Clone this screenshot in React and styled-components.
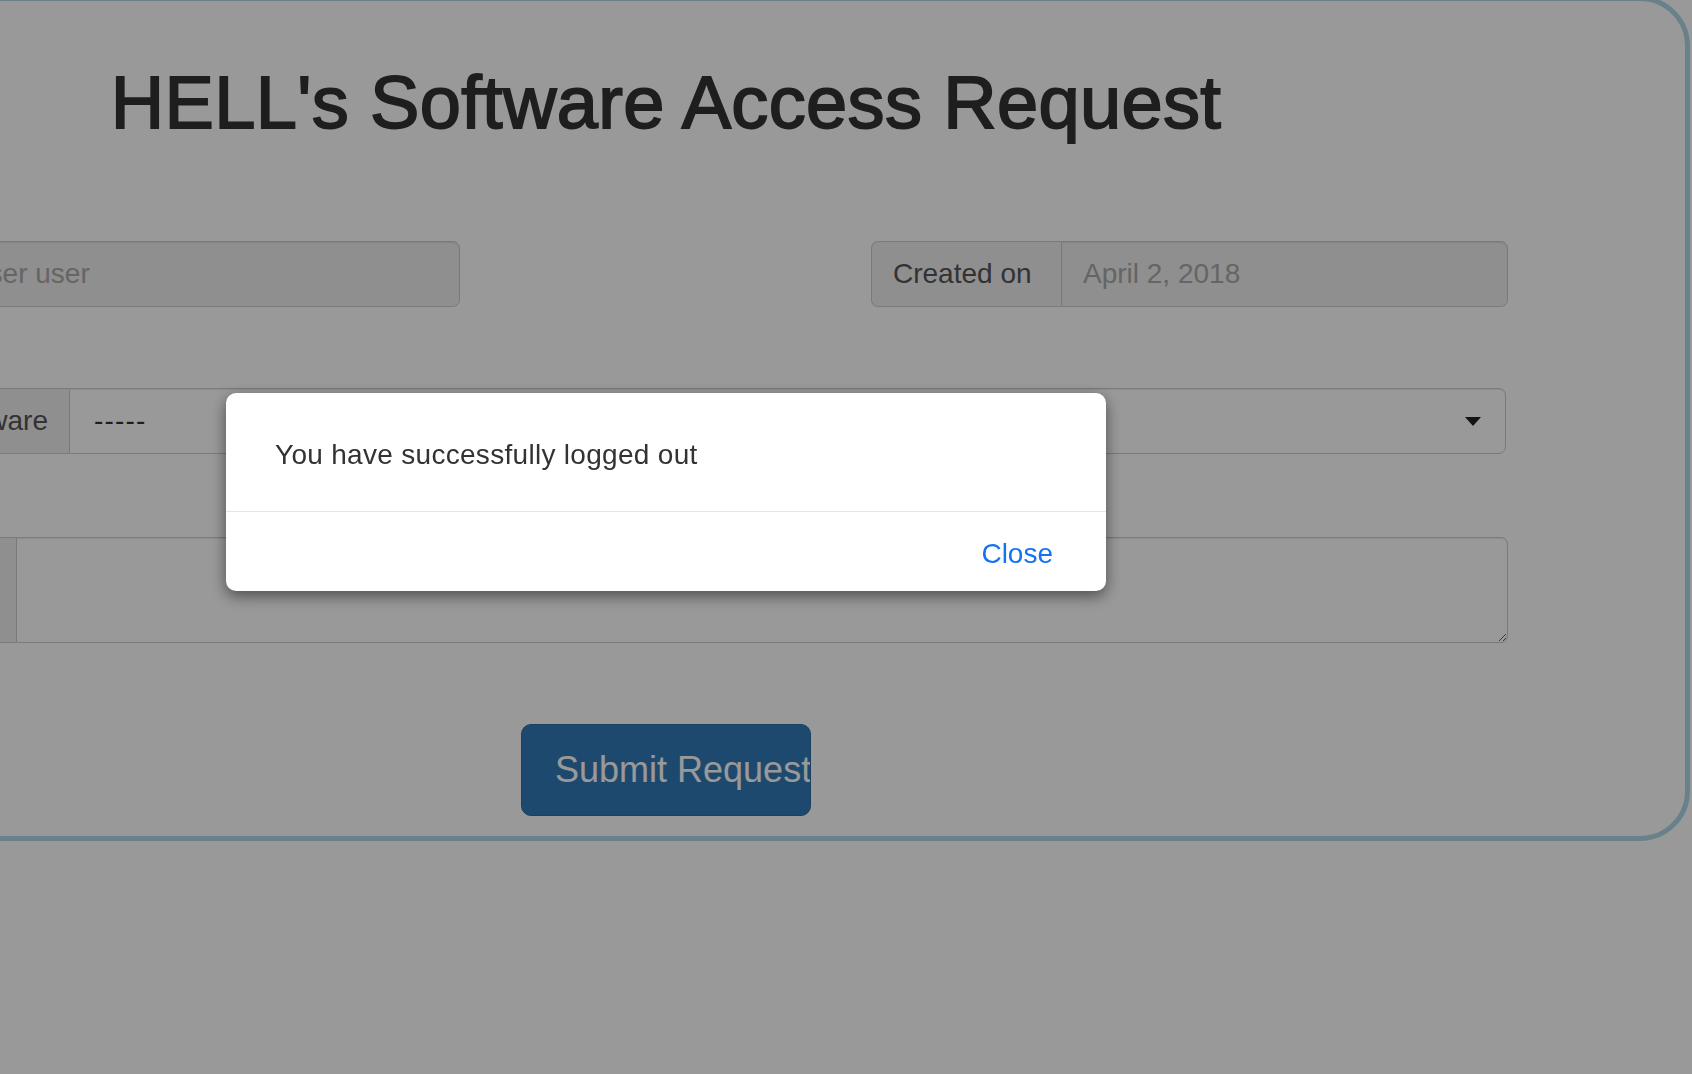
import React from "react";
import styled, { createGlobalStyle } from "styled-components";

const GlobalStyle = createGlobalStyle`
  html, body {
    margin: 0;
    padding: 0;
    background: #ffffff;
    overflow: hidden;
  }
  body {
    font-family: "Liberation Sans", Arial, Helvetica, sans-serif;
    color: #333333;
  }
  * { box-sizing: border-box; }
`;

const Viewport = styled.div`
  position: relative;
  width: 1692px;
  height: 1074px;
  overflow: hidden;
`;

const FormCard = styled.div`
  width: 2048px;
  margin-left: -358px;
  margin-top: -4px;
  border: 5px solid #add8e6;
  border-radius: 50px;
  background: #ffffff;
  padding: 57px 177px 20px;
  display: flex;
  flex-direction: column;
`;

const Title = styled.h1`
  margin: 0;
  font-size: 74px;
  line-height: 89px;
  font-weight: 500;
  color: #333333;
  text-align: center;
  -webkit-text-stroke: 1.8px #333333;
  letter-spacing: 0.35px;
`;

const Row = styled.div`
  display: flex;
  justify-content: ${(p) => p.$justify || "flex-start"};
  margin-top: ${(p) => p.$top}px;
`;

const InputGroup = styled.div`
  display: flex;
  width: ${(p) => (p.$width ? `${p.$width}px` : "100%")};
  height: ${(p) => p.$height || 66}px;
`;

const Addon = styled.span`
  flex: 0 0 ${(p) => p.$width}px;
  display: flex;
  align-items: ${(p) => (p.$top ? "flex-start" : "center")};
  justify-content: ${(p) => (p.$right ? "flex-end" : "flex-start")};
  padding: ${(p) => (p.$top ? "12px 21px" : "0 21px")};
  background: #eeeeee;
  border: 1px solid #cccccc;
  border-right: 0;
  border-radius: 7px 0 0 7px;
  font-size: 28px;
  color: #555555;
  white-space: nowrap;
  overflow: hidden;
`;

const TextField = styled.input`
  flex: 1;
  min-width: 0;
  height: 100%;
  margin: 0;
  padding: 0 21px;
  border: 1px solid #cccccc;
  border-radius: 0 7px 7px 0;
  background: ${(p) => (p.readOnly ? "#eeeeee" : "#ffffff")};
  box-shadow: inset 0 1px 1px rgba(0, 0, 0, 0.075);
  font-family: inherit;
  font-size: 28px;
  color: #555555;
  outline: none;
  &::placeholder {
    color: #a9a9a9;
  }
`;

const SelectBox = styled.div`
  flex: 1;
  display: flex;
  align-items: center;
  justify-content: space-between;
  margin-right: 2px;
  padding: 0 24px 0 24px;
  border: 1px solid #cccccc;
  border-radius: 0 7px 7px 0;
  background: #ffffff;
  box-shadow: inset 0 1px 1px rgba(0, 0, 0, 0.075);
  font-size: 28px;
  color: #333333;
  letter-spacing: 1.2px;
`;

const Caret = styled.svg`
  width: 16px;
  height: 9px;
  flex: 0 0 auto;
`;

const TextArea = styled.textarea`
  flex: 1;
  height: 100%;
  margin: 0;
  padding: 10px 21px;
  border: 1px solid #cccccc;
  border-radius: 0 7px 7px 0;
  background: #ffffff;
  box-shadow: inset 0 1px 1px rgba(0, 0, 0, 0.075);
  font-family: inherit;
  font-size: 28px;
  color: #555555;
  resize: vertical;
  outline: none;
`;

const SubmitButton = styled.button`
  width: 290px;
  height: 92px;
  padding: 0 0 0 33px;
  border: 1px solid #2e6da4;
  border-radius: 10px;
  background: #337ab7;
  color: #ffffff;
  font-family: inherit;
  font-size: 36px;
  text-align: left;
  white-space: nowrap;
  overflow: hidden;
  cursor: pointer;
`;

const Backdrop = styled.div`
  position: fixed;
  inset: 0;
  background: rgba(0, 0, 0, 0.4);
  padding: 393px 0 0 226px;
`;

const Modal = styled.div`
  width: 880px;
  background: #ffffff;
  border-radius: 10px;
  box-shadow: 0 5px 15px rgba(0, 0, 0, 0.5);
  overflow: hidden;
`;

const ModalBody = styled.p`
  margin: 0;
  padding: 41px 49px 35px;
  font-size: 28px;
  line-height: 42px;
  letter-spacing: 0.3px;
  color: #333333;
`;

const ModalFooter = styled.div`
  display: flex;
  justify-content: flex-end;
  padding: 21px 53px 16px;
  border-top: 1px solid #e5e5e5;
`;

const LinkButton = styled.button`
  margin: 0;
  padding: 0;
  border: 0;
  background: none;
  font-family: inherit;
  font-size: 28px;
  line-height: 42px;
  color: #1673ef;
  cursor: pointer;
`;

export default function App() {
  return (
    <>
      <GlobalStyle />
      <Viewport>
        <FormCard>
          <Title>HELL's Software Access Request</Title>

          <Row $top={94} $justify="space-between">
            <InputGroup $width={636}>
              <Addon $width={127}>Name</Addon>
              <TextField readOnly placeholder="user user" />
            </InputGroup>
            <InputGroup $width={637}>
              <Addon $width={190}>Created on</Addon>
              <TextField readOnly placeholder="April 2, 2018" />
            </InputGroup>
          </Row>

          <Row $top={81}>
            <InputGroup>
              <Addon $width={245} $right>
                Select Software
              </Addon>
              <SelectBox>
                <span>-----</span>
                <Caret viewBox="0 0 16 9">
                  <path d="M0 0 H16 L8 9 Z" fill="#222" />
                </Caret>
              </SelectBox>
            </InputGroup>
          </Row>

          <Row $top={83}>
            <InputGroup $height={106}>
              <Addon $width={192} $top>
                Comments
              </Addon>
              <TextArea />
            </InputGroup>
          </Row>

          <Row $top={81} $justify="center">
            <SubmitButton type="button">Submit Request</SubmitButton>
          </Row>
        </FormCard>

        <Backdrop>
          <Modal>
            <ModalBody>You have successfully logged out</ModalBody>
            <ModalFooter>
              <LinkButton type="button">Close</LinkButton>
            </ModalFooter>
          </Modal>
        </Backdrop>
      </Viewport>
    </>
  );
}
